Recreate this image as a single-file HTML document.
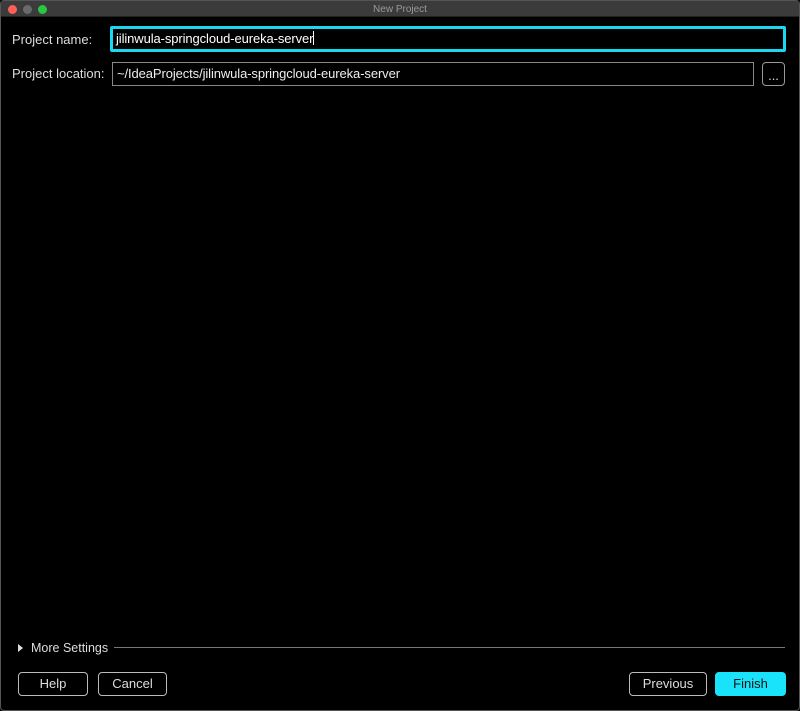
<!DOCTYPE html>
<html><head><style>
body{margin:0;width:800px;height:711px;background:#000;overflow:hidden;font-family:"Liberation Sans",sans-serif;font-size:13px;color:#ddd;position:relative}
.win{position:absolute;left:0;top:0;width:798px;height:709px;border:1px solid #555;border-radius:4px}
.title{position:absolute;left:1px;top:1px;width:798px;height:15px;background:#3b3b3b;border-bottom:1px solid #222;text-align:center;font-size:10px;line-height:17px;color:#9a9a9a}
.dot{position:absolute;top:4px;width:9px;height:9px;border-radius:50%}
.a{position:absolute}
.lbl{font-size:13px;color:#ddd}
.btn{position:absolute;height:22px;border:1px solid #bbb;border-radius:4px;text-align:center;line-height:22px;font-size:13px;color:#ddd;box-sizing:content-box}
</style></head><body>
<div class="win"></div>
<div class="title">New Project
<div class="dot" style="left:7px;background:#fe5f57"></div>
<div class="dot" style="left:22px;background:#6a6a6a"></div>
<div class="dot" style="left:37px;background:#28c940"></div>
</div>
<div class="a lbl" style="left:12px;top:32px">Project name:</div>
<div class="a" style="left:110px;top:26px;width:667px;height:20px;border:3px solid #1ad8f0;border-radius:2px;line-height:20px;padding-left:3px;color:#fff;letter-spacing:-0.1px">jilinwula-springcloud-eureka-server<span style="display:inline-block;width:1px;height:14px;background:#fff;vertical-align:-2px"></span></div>
<div class="a lbl" style="left:12px;top:66px">Project location:</div>
<div class="a" style="left:112px;top:62px;width:636px;height:22px;border:1px solid #888;line-height:22px;padding-left:4px;color:#eee;letter-spacing:-0.1px">~/IdeaProjects/jilinwula-springcloud-eureka-server</div>
<div class="btn" style="left:762px;top:62px;width:21px;line-height:26px;border-color:#999">...</div>
<div class="a" style="left:18px;top:644px;width:0;height:0;border-left:5px solid #ddd;border-top:4px solid transparent;border-bottom:4px solid transparent"></div>
<div class="a lbl" style="left:31px;top:641px;font-size:12.5px">More Settings</div>
<div class="a" style="left:114px;top:647px;width:671px;height:1px;background:#777"></div>
<div class="btn" style="left:18px;top:672px;width:68px">Help</div>
<div class="btn" style="left:98px;top:672px;width:67px">Cancel</div>
<div class="btn" style="left:629px;top:672px;width:76px">Previous</div>
<div class="btn" style="left:715px;top:672px;width:69px;background:#19e3fb;border-color:#19e3fb;color:#111">Finish</div>
</body></html>
